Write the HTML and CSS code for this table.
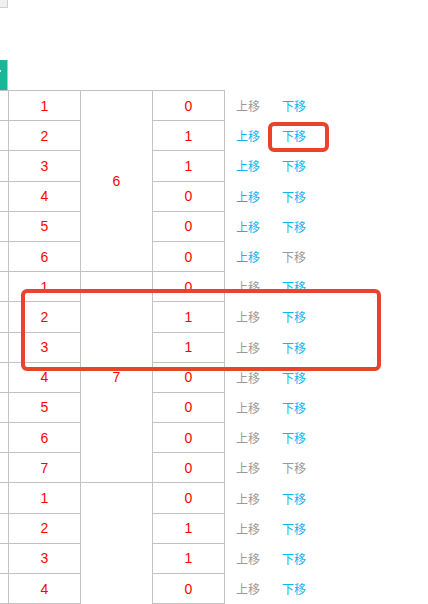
FILE: index.html
```html
<!DOCTYPE html>
<html lang="zh-CN">
<head>
    <meta charset="UTF-8">
    <meta name="viewport" content="width=device-width, initial-scale=1.0">
    <title>排序列表</title>
    <link rel="stylesheet" href="styles.css">
</head>
<body>
    <div class="page">
        <div class="corner-box"></div>
        <div class="tab-btn"><span class="tab-dot"></span></div>

        <div class="table-wrap">
            <table class="sort-table">
                <tbody>
                    <!-- 第一组 -->
                    <tr>
                        <td class="col-first"></td>
                        <td>1</td>
                        <td rowspan="6">6</td>
                        <td>0</td>
                        <td class="actions"><a class="off">上移</a><a class="on">下移</a></td>
                    </tr>
                    <tr>
                        <td class="col-first"></td>
                        <td>2</td>
                        <td>1</td>
                        <td class="actions"><a class="on">上移</a><a class="on">下移</a></td>
                    </tr>
                    <tr>
                        <td class="col-first"></td>
                        <td>3</td>
                        <td>1</td>
                        <td class="actions"><a class="on">上移</a><a class="on">下移</a></td>
                    </tr>
                    <tr>
                        <td class="col-first"></td>
                        <td>4</td>
                        <td>0</td>
                        <td class="actions"><a class="on">上移</a><a class="on">下移</a></td>
                    </tr>
                    <tr>
                        <td class="col-first"></td>
                        <td>5</td>
                        <td>0</td>
                        <td class="actions"><a class="on">上移</a><a class="on">下移</a></td>
                    </tr>
                    <tr>
                        <td class="col-first"></td>
                        <td>6</td>
                        <td>0</td>
                        <td class="actions"><a class="on">上移</a><a class="off">下移</a></td>
                    </tr>

                    <!-- 第二组 -->
                    <tr>
                        <td class="col-first"></td>
                        <td>1</td>
                        <td rowspan="7">7</td>
                        <td>0</td>
                        <td class="actions"><a class="off">上移</a><a class="on">下移</a></td>
                    </tr>
                    <tr>
                        <td class="col-first"></td>
                        <td>2</td>
                        <td>1</td>
                        <td class="actions"><a class="off">上移</a><a class="on">下移</a></td>
                    </tr>
                    <tr>
                        <td class="col-first"></td>
                        <td>3</td>
                        <td>1</td>
                        <td class="actions"><a class="off">上移</a><a class="on">下移</a></td>
                    </tr>
                    <tr>
                        <td class="col-first"></td>
                        <td>4</td>
                        <td>0</td>
                        <td class="actions"><a class="off">上移</a><a class="on">下移</a></td>
                    </tr>
                    <tr>
                        <td class="col-first"></td>
                        <td>5</td>
                        <td>0</td>
                        <td class="actions"><a class="off">上移</a><a class="on">下移</a></td>
                    </tr>
                    <tr>
                        <td class="col-first"></td>
                        <td>6</td>
                        <td>0</td>
                        <td class="actions"><a class="off">上移</a><a class="on">下移</a></td>
                    </tr>
                    <tr>
                        <td class="col-first"></td>
                        <td>7</td>
                        <td>0</td>
                        <td class="actions"><a class="off">上移</a><a class="off">下移</a></td>
                    </tr>

                    <!-- 第三组 -->
                    <tr>
                        <td class="col-first"></td>
                        <td>1</td>
                        <td rowspan="9">9</td>
                        <td>0</td>
                        <td class="actions"><a class="off">上移</a><a class="on">下移</a></td>
                    </tr>
                    <tr>
                        <td class="col-first"></td>
                        <td>2</td>
                        <td>1</td>
                        <td class="actions"><a class="off">上移</a><a class="on">下移</a></td>
                    </tr>
                    <tr>
                        <td class="col-first"></td>
                        <td>3</td>
                        <td>1</td>
                        <td class="actions"><a class="off">上移</a><a class="on">下移</a></td>
                    </tr>
                    <tr>
                        <td class="col-first"></td>
                        <td>4</td>
                        <td>0</td>
                        <td class="actions"><a class="off">上移</a><a class="on">下移</a></td>
                    </tr>
                    <tr>
                        <td class="col-first"></td>
                        <td>5</td>
                        <td>0</td>
                        <td class="actions"><a class="off">上移</a><a class="on">下移</a></td>
                    </tr>
                    <tr>
                        <td class="col-first"></td>
                        <td>6</td>
                        <td>0</td>
                        <td class="actions"><a class="off">上移</a><a class="on">下移</a></td>
                    </tr>
                    <tr>
                        <td class="col-first"></td>
                        <td>7</td>
                        <td>0</td>
                        <td class="actions"><a class="off">上移</a><a class="on">下移</a></td>
                    </tr>
                    <tr>
                        <td class="col-first"></td>
                        <td>8</td>
                        <td>0</td>
                        <td class="actions"><a class="off">上移</a><a class="on">下移</a></td>
                    </tr>
                    <tr>
                        <td class="col-first"></td>
                        <td>9</td>
                        <td>0</td>
                        <td class="actions"><a class="off">上移</a><a class="off">下移</a></td>
                    </tr>
                </tbody>
            </table>
        </div>

        <!-- 标注框 -->
        <div class="mark mark-small"></div>
        <div class="mark mark-large"></div>
    </div>
</body>
</html>
```

FILE: styles.css
```css
html, body {
    margin: 0;
    padding: 0;
    overflow: hidden;
    background-color: #fff;
}
.page {
    position: relative;
    height: 604px;
    overflow: hidden;
    font-family: "Liberation Sans", "Noto Sans CJK SC", sans-serif;
}
.corner-box {
    width: 7px;
    height: 7px;
    background-color: #f0f0f0;
    border-right: 1px solid #cfcfcf;
    border-bottom: 1px solid #cfcfcf;
}
.tab-btn {
    margin-top: 52px;
    width: 7px;
    height: 30px;
    background-color: #1bb597;
    border-right: 1px solid #c2c2c2;
    position: relative;
}
.tab-dot {
    position: absolute;
    left: 0;
    top: 10px;
    width: 1px;
    height: 2px;
    background-color: #fff3d0;
}
.table-wrap {
    margin-left: -64px;
    width: 700px;
}
.sort-table {
    border-collapse: collapse;
}
.sort-table td {
    width: 71px;
    height: 29.2px;
    padding: 0;
    border: 1px solid #c2c2c2;
    text-align: center;
    color: #ff0000;
    font-size: 14px;
}
.sort-table td.actions {
    width: 160px;
    border-top: none;
    border-bottom: none;
    border-right: none;
    text-align: left;
    padding-left: 11px;
    font-family: "Noto Sans CJK SC", sans-serif;
    font-size: 12px;
    white-space: nowrap;
}
.actions a {
    display: inline-block;
    margin-right: 22px;
    cursor: pointer;
}
.actions a.on {
    color: #10b4ef;
}
.actions a.off {
    color: #999;
}
.mark {
    position: absolute;
    border: 4px solid #e8432b;
    border-radius: 6px;
    box-sizing: border-box;
}
.mark-small {
    left: 268px;
    top: 122px;
    width: 61px;
    height: 30px;
}
.mark-large {
    left: 21px;
    top: 289px;
    width: 360px;
    height: 82px;
}
```
